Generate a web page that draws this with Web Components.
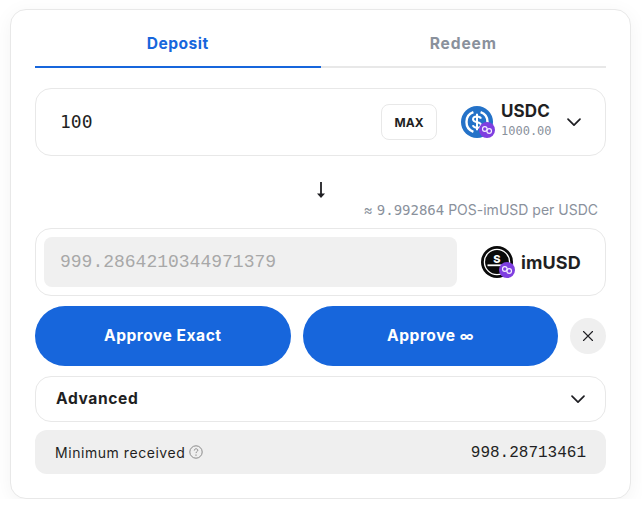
<!DOCTYPE html>
<html><head><meta charset="utf-8">
<style>
html,body{margin:0;padding:0;background:#fff}
body{font-family:Inter,"Liberation Sans",sans-serif;color:#1f1f23}
</style></head><body>
<swap-card>
  <tab-bar></tab-bar>
  <from-box></from-box>
  <rate-row></rate-row>
  <to-box></to-box>
  <action-row></action-row>
  <advanced-row></advanced-row>
  <min-row></min-row>
</swap-card>
<script>
const BADGE=`<circle cx="26" cy="24" r="8" fill="#7f3fe0"/><g fill="none" stroke="#f3ecff" stroke-width="1.2"><circle cx="23.800" cy="23" r="2.300"/><circle cx="28.200" cy="25" r="2.300"/></g>`;
function def(name,css,html){customElements.define(name,class extends HTMLElement{constructor(){super();this.attachShadow({mode:'open'}).innerHTML=`<style>${css}</style>${html}`}})}
const CHEV=`<svg width="16" height="16" viewBox="0 0 16 16" fill="none" stroke="#1f1f23" stroke-width="1.7" stroke-linecap="round" stroke-linejoin="round"><path d="M2 5.200l6 6 6-6"/></svg>`;
const BOX=`box-sizing:border-box;border:1px solid #e8e8e8;border-radius:16px;background:#fff;display:flex;align-items:center;`;

def('swap-card',`:host{display:flex;flex-direction:column;box-sizing:border-box;width:621px;height:490px;margin:9px 0 0 10px;padding:0 24px;background:#fff;border:1px solid #e8e8e8;border-radius:16px;box-shadow:0 4px 20px rgba(0,0,0,.05)}`,`<slot></slot>`);

def('tab-bar',`:host{display:flex;height:58px}
.t{flex:1;display:flex;align-items:center;justify-content:center;box-sizing:border-box;height:58px;padding-top:10px;font:700 15.6px Inter,sans-serif;letter-spacing:.45px;border-bottom:2px solid #e8e8e8;color:#8a919c}
.r{letter-spacing:.85px}
.a{color:#1766dc;border-bottom-color:#1766dc}`,`<div class="t a">Deposit</div><div class="t r">Redeem</div>`);

def('from-box',`:host{${BOX}height:68px;margin-top:20px;padding:0 23px 0 24px}
.v{flex:1;font:18px "DejaVu Sans Mono",monospace;color:#1f1f23;padding-bottom:2px}
.m{box-sizing:border-box;width:56px;height:36px;border:1px solid #e8e8e8;border-radius:8px;display:flex;align-items:center;justify-content:center;font:700 12px Inter,sans-serif;color:#1f1f23;letter-spacing:0}
svg.i{margin-left:24px;display:block;flex:none}
.n{margin-left:4px;width:58px;display:flex;flex-direction:column;margin-top:-2px}
.s{font:700 17px/19px Inter,sans-serif;letter-spacing:.1px;margin-top:-2px}
.b{font:12px/14px "DejaVu Sans Mono",monospace;color:#8a919c;margin-top:3px}
.c{display:flex;margin-left:7px}`,
`<div class="v">100</div><div class="m">MAX</div>
<svg class="i" width="36" height="32" viewBox="0 0 36 32"><circle cx="16" cy="16" r="16" fill="#2472c8"/>
<g fill="none" stroke="#fff" stroke-width="2.400"><path d="M12.400 6.200A10.400 10.400 0 0 0 12.400 25.800"/><path d="M19.600 6.200A10.400 10.400 0 0 1 19.600 25.800"/></g>
<path d="M20 12.600c-.5-1.500-2-2.200-4-2.200-2.300 0-4 1.100-4 2.900 0 4 8 2 8 5.600 0 1.800-1.700 2.800-4 2.800-2.200 0-3.700-.8-4.200-2.400" fill="none" stroke="#fff" stroke-width="2"/><path d="M16 7.800v16.400" stroke="#fff" stroke-width="2"/>
${BADGE}</svg>
<div class="n"><div class="s">USDC</div><div class="b">1000.00</div></div><div class="c">${CHEV}</div>`);

def('rate-row',`:host{display:block;height:72px;position:relative}
.a{display:flex;justify-content:center;padding-top:26px;height:19px}
.r{position:absolute;right:8px;top:45px;font:14px/18px Inter,sans-serif;color:#8a919c;white-space:nowrap}
.x{font-family:"DejaVu Sans Mono",monospace;font-size:14px}`,
`<div class="a"><svg width="12" height="18" viewBox="0 0 12 18" fill="#1f1f23"><path d="M5.100 0h1.800v12H5.100z"/><path d="M2 11.500h8L6 16z"/></svg></div>
<div class="r">≈ <span class="x">9.992864</span> POS-imUSD per USDC</div>`);

def('to-box',`:host{${BOX}height:68px;padding:0 20px 0 8px}
.v{box-sizing:border-box;flex:none;width:413px;height:50px;border-radius:8px;background:#f0f0f0;color:#a8a8a8;font:18px/50px "Liberation Mono",monospace;padding-left:16px}
svg{margin-left:24px;flex:none;display:block}
.s{margin-left:4px;font:700 18px Inter,sans-serif;letter-spacing:.1px}`,
`<div class="v">999.2864210344971379</div>
<svg width="36" height="32" viewBox="0 0 36 32"><circle cx="16" cy="16" r="16" fill="#0a0a0a"/><circle cx="16" cy="16" r="12.600" fill="none" stroke="#fff" stroke-width="1.300"/>
<text x="16" y="16.500" text-anchor="middle" font-family="Inter,sans-serif" font-weight="800" font-size="11" fill="#fff">S</text><path d="M6.500 19.300h19" stroke="#fff" stroke-width="1.800"/>${BADGE}</svg>
<div class="s">imUSD</div>`);

def('action-row',`:host{display:flex;align-items:center;gap:12px;margin-top:10px}
.b{flex:1;height:60px;border-radius:30px;background:#1766dc;color:#fff;font:700 15.6px/60px Inter,sans-serif;letter-spacing:.5px;text-align:center}
.b span{font-size:14px;letter-spacing:0}
.x{width:36px;height:36px;border-radius:50%;background:#efefef;display:flex;align-items:center;justify-content:center;flex:none}`,
`<div class="b">Approve Exact</div><div class="b">Approve <span>∞</span></div>
<div class="x"><svg width="12" height="12" viewBox="0 0 12 12" stroke="#1f1f23" stroke-width="1.100" stroke-linecap="round"><path d="M1.500 1.500l9 9M10.500 1.500l-9 9"/></svg></div>`);

def('advanced-row',`:host{${BOX}height:46px;margin-top:10px;padding:0 19px 0 20px;justify-content:space-between}
.t{font:700 15.6px Inter,sans-serif;letter-spacing:.6px;padding-bottom:2px}svg{display:block}`,
`<div class="t">Advanced</div>${CHEV}`);

def('min-row',`:host{display:flex;align-items:center;justify-content:space-between;box-sizing:border-box;height:44px;margin-top:8px;padding:0 20px;border-radius:12px;background:#efefef}
.l{display:flex;align-items:center;gap:4px;font:400 14px Inter,sans-serif;letter-spacing:.55px}
.v{font:16px "Liberation Mono",monospace;padding-top:1px}`,
`<div class="l">Minimum received <svg width="14" height="14" viewBox="0 0 14 14" fill="none" stroke="#8a8a8a"><circle cx="7" cy="7" r="6.200"/><path d="M5.300 5.500c0-1 .8-1.700 1.800-1.700s1.700.7 1.700 1.500c0 1.300-1.800 1.300-1.800 2.800" stroke-width="1"/><path d="M7 9.600v1.100" stroke-width="1.100"/></svg></div>
<div class="v">998.28713461</div>`);
</script>
</body></html>
